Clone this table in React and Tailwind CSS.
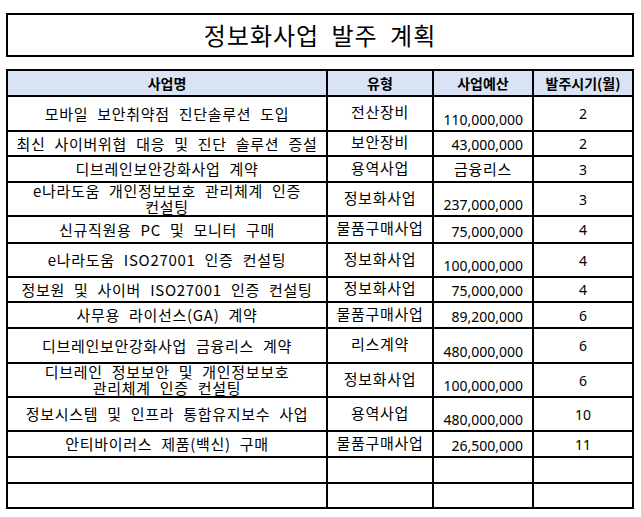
const rows = [
  { nome: "모바일 보안취약점 진단솔루션 도입", tipo: "전산장비", valor: "110,000,000", mes: "2", h: "h-[35px]" },
  { nome: "최신 사이버위협 대응 및 진단 솔루션 증설", tipo: "보안장비", valor: "43,000,000", mes: "2", h: "h-[25px]" },
  { nome: "디브레인보안강화사업 계약", tipo: "용역사업", texto: "금융리스", mes: "3", h: "h-[26px]" },
  { nome: ["e나라도움 개인정보보호 관리체계 인증", "컨설팅"], tipo: "정보화사업", valor: "237,000,000", mes: "3", h: "h-[34px]" },
  { nome: "신규직원용 PC 및 모니터 구매", tipo: "물품구매사업", valor: "75,000,000", mes: "4", h: "h-[27px]" },
  { nome: "e나라도움 ISO27001 인증 컨설팅", tipo: "정보화사업", valor: "100,000,000", mes: "4", h: "h-[34px]" },
  { nome: "정보원 및 사이버 ISO27001 인증 컨설팅", tipo: "정보화사업", valor: "75,000,000", mes: "4", h: "h-[25px]" },
  { nome: "사무용 라이선스(GA) 계약", tipo: "물품구매사업", valor: "89,200,000", mes: "6", h: "h-[26px]" },
  { nome: "디브레인보안강화사업 금융리스 계약", tipo: "리스계약", valor: "480,000,000", mes: "6", h: "h-[35px]" },
  { nome: ["디브레인 정보보안 및 개인정보보호", "관리체계 인증 컨설팅"], tipo: "정보화사업", valor: "100,000,000", mes: "6", h: "h-[34px]" },
  { nome: "정보시스템 및 인프라 통합유지보수 사업", tipo: "용역사업", valor: "480,000,000", mes: "10", h: "h-[34px]" },
  { nome: "안티바이러스 제품(백신) 구매", tipo: "물품구매사업", valor: "26,500,000", mes: "11", h: "h-[26px]" },
  { h: "h-[26px]" },
  { h: "h-[23px]", last: true },
];

const ko = "font-['Noto_Sans_CJK_KR',sans-serif]";
const num = "font-['Noto_Sans','Noto_Sans_CJK_KR',sans-serif]";

export default function App() {
  return (
    <div className={`w-[641px] h-[517px] bg-white text-black ${ko}`}>
      <div className="pt-[13px] pl-[6px]">
        <div className="w-[628px] h-[44px] border-2 border-black flex items-center justify-center text-[24px] tracking-[1px] [word-spacing:6px]">
          정보화사업 발주 계획
        </div>
      </div>

      <div className="pt-[12px] pl-[6px]">
        <div className="w-[628px] border-2 border-black">
          <div className="flex h-[26px] border-b-2 border-black bg-[#dae3f3] text-[14px] font-bold">
            <div className="w-[320px] border-r-2 border-black flex items-center justify-center">사업명</div>
            <div className="w-[106px] border-r-2 border-black flex items-center justify-center">유형</div>
            <div className="w-[100px] border-r-2 border-black flex items-center justify-center">사업예산</div>
            <div className="flex-1 flex items-center justify-center">발주시기(월)</div>
          </div>

          {rows.map((r, i) => (
            <div key={i} className={`flex ${r.h} ${r.last ? "" : "border-b-2 border-black"}`}>
              <div className="w-[320px] border-r-2 border-black flex items-center justify-center text-center text-[15px] leading-[16px] tracking-[0.7px] [word-spacing:5px]">
                {Array.isArray(r.nome) ? (
                  <span>{r.nome[0]}<br />{r.nome[1]}</span>
                ) : (
                  r.nome
                )}
              </div>
              <div className="w-[106px] border-r-2 border-black flex items-center justify-center pb-[2px] text-[15px] tracking-[0.7px]">
                {r.tipo}
              </div>
              {r.texto ? (
                <div className="w-[100px] border-r-2 border-black flex items-center justify-center text-[15px] tracking-[0.7px]">
                  {r.texto}
                </div>
              ) : (
                <div className={`w-[100px] border-r-2 border-black flex items-end justify-end pr-[9px] text-[14px] leading-[20px] ${num}`}>
                  {r.valor}
                </div>
              )}
              <div className={`flex-1 flex items-center justify-center text-[14px] ${num}`}>{r.mes}</div>
            </div>
          ))}
        </div>
      </div>
    </div>
  );
}
